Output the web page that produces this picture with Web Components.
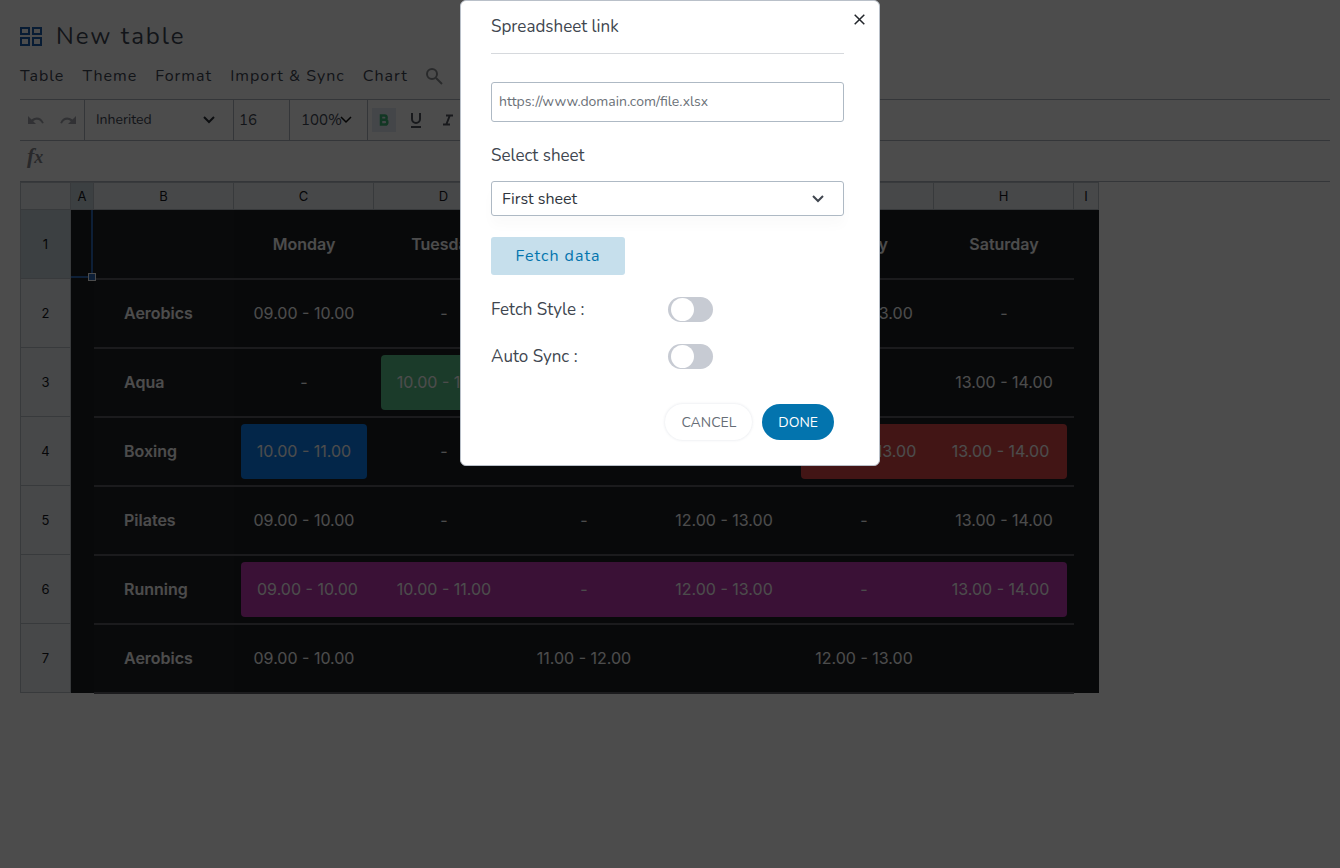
<!DOCTYPE html>
<html lang="en">
<head>
<meta charset="utf-8">
<meta name="viewport" content="width=device-width, initial-scale=1">
<title>New table</title>
<style>
  body {
    margin: 0;
    background: #fff;
    color: #3f4754;
    font-family: Nunito, Lato, sans-serif;
    font-size: 16px;
  }
  main {
    padding: 20px 10px 20px 20px;
  }
</style>
</head>
<body>
<main>
  <table-title>New table</table-title>
  <menu-bar>
    <button>Table</button>
    <button>Theme</button>
    <button>Format</button>
    <button>Import &amp; Sync</button>
    <button>Chart</button>
  </menu-bar>
  <tool-bar></tool-bar>
  <formula-bar></formula-bar>
  <sheet-grid></sheet-grid>
</main>
<link-dialog>
  <span slot="title">Spreadsheet link</span>
  <toggle-row>Fetch Style :</toggle-row>
  <toggle-row>Auto Sync :</toggle-row>
</link-dialog>

<script>
class TableTitle extends HTMLElement {
  connectedCallback() {
    this.attachShadow({ mode: 'open' });
    this.shadowRoot.innerHTML = `
      <style>
        :host {
          display: flex;
          align-items: center;
          gap: 14px;
          height: 33px;
        }
        svg { width: 22px; height: 20px; }
        h1 {
          margin: 0;
          font-size: 24px;
          font-weight: 400;
          letter-spacing: 2px;
          line-height: 35px;
        }
      </style>
      <svg viewBox="0 0 22 20" fill="none" stroke="#1c5fae" stroke-width="2" aria-hidden="true">
        <rect x="1" y="1" width="8" height="6"/>
        <rect x="13" y="1" width="8" height="6"/>
        <rect x="1" y="11" width="8" height="7"/>
        <rect x="13" y="11" width="8" height="7"/>
      </svg>
      <h1><slot></slot></h1>
    `;
  }
}
customElements.define('table-title', TableTitle);

class MenuBar extends HTMLElement {
  connectedCallback() {
    this.attachShadow({ mode: 'open' });
    this.shadowRoot.innerHTML = `
      <style>
        :host {
          display: flex;
          align-items: center;
          gap: 18px;
          height: 46px;
        }
        button, ::slotted(button) {
          border: 0;
          padding: 0;
          background: none;
          color: inherit;
          font: inherit;
          letter-spacing: 1px;
          cursor: pointer;
        }
        button { display: flex; }
        svg { width: 18px; height: 18px; }
      </style>
      <slot></slot>
      <button aria-label="Search">
        <svg viewBox="0 0 18 18" fill="none" stroke="#8b8d92" stroke-width="2">
          <circle cx="6" cy="7" r="5"/>
          <path d="M10 11l6 6"/>
        </svg>
      </button>
    `;
  }
}
customElements.define('menu-bar', MenuBar);

class ToolBar extends HTMLElement {
  connectedCallback() {
    this.attachShadow({ mode: 'open' });
    this.shadowRoot.innerHTML = `
      <style>
        :host {
          display: flex;
          height: 40px;
          border-top: 1px solid #aeb4c0;
          border-bottom: 1px solid #aeb4c0;
        }
        .group {
          display: flex;
          align-items: center;
          box-sizing: border-box;
          border-right: 1px solid #aeb4c0;
        }
        .history { width: 65px; justify-content: space-around; }
        .font { width: 149px; }
        .size { width: 56px; }
        .zoom { width: 78px; }
        .marks { gap: 8px; padding-left: 4px; border: 0; }
        button {
          display: flex;
          align-items: center;
          justify-content: center;
          width: 24px;
          height: 24px;
          padding: 0;
          border: 0;
          background: none;
          color: #50555f;
        }
        button.on { background: #e4ecf4; color: #3fb878; }
        select, input {
          appearance: none;
          border: 0;
          background: none;
          color: inherit;
          font: inherit;
          font-size: 15px;
          box-sizing: border-box;
          width: 100%;
          height: 38px;
          padding: 0;
          outline: none;
        }
        .font select { font-size: 14px; padding: 0 0 2px 11px; }
        .size input { padding-left: 5px; }
        .zoom select { padding-left: 11px; }
        .font svg { width: 12px; margin: 0 18px 0 -30px; }
        .zoom svg { width: 12px; margin: 0 15px 0 -27px; }
        svg { flex: none; pointer-events: none; }
      </style>
      <div class="group history">
        <button aria-label="Undo">
          <svg width="16" height="10" viewBox="0 0 16 10">
            <path d="M0 1v8h8L5.200 6.200C9 3.500 12.500 5 14 8.500l1.800-.600C13.500 2 8 1 3.500 4.500z" fill="#a3a6ad"/>
          </svg>
        </button>
        <button aria-label="Redo">
          <svg width="16" height="10" viewBox="0 0 16 10">
            <path d="M16 1v8H8l2.800-2.800C7 3.500 3.500 5 2 8.500L.200 7.900C2.500 2 8 1 12.500 4.500z" fill="#a3a6ad"/>
          </svg>
        </button>
      </div>
      <div class="group font">
        <select aria-label="Font"><option>Inherited</option></select>
        <svg height="8" viewBox="0 0 12 8" fill="none" stroke="#2b3038" stroke-width="2"><path d="M1 1l5 5 5-5"/></svg>
      </div>
      <div class="group size">
        <input aria-label="Font size" value="16">
      </div>
      <div class="group zoom">
        <select aria-label="Zoom"><option>100%</option></select>
        <svg height="8" viewBox="0 0 12 8" fill="none" stroke="#111" stroke-width="1.500"><path d="M1 1l5 5 5-5"/></svg>
      </div>
      <div class="group marks">
        <button class="on" aria-label="Bold">
          <svg width="10" height="12" viewBox="0 0 10 12" fill="none" stroke="currentColor" stroke-width="2.500">
            <path d="M2 1.500h3.500a2 2 0 0 1 0 4.300H2zM2 5.800h4a2.300 2.300 0 0 1 0 4.700H2z"/>
          </svg>
        </button>
        <button aria-label="Underline">
          <svg width="12" height="15" viewBox="0 0 12 15" fill="none" stroke="currentColor" stroke-width="2">
            <path d="M2 0v6a4 4 0 0 0 8 0V0M1 14h10"/>
          </svg>
        </button>
        <button aria-label="Italic">
          <svg width="10" height="12" viewBox="0 0 10 12" fill="none" stroke="currentColor" stroke-width="2">
            <path d="M3 1.500h7M0 10.500h7M6.800 1.500l-3.500 9"/>
          </svg>
        </button>
      </div>
    `;
  }
}
customElements.define('tool-bar', ToolBar);

class FormulaBar extends HTMLElement {
  connectedCallback() {
    this.attachShadow({ mode: 'open' });
    this.shadowRoot.innerHTML = `
      <style>
        :host {
          display: flex;
          height: 40px;
          border-bottom: 1px solid #aeb4c0;
        }
        label {
          padding: 0 7px;
          color: #85888e;
          font: italic bold 22px/30px "Liberation Serif", serif;
        }
        small { font-size: 18px; }
        input {
          flex: 1;
          border: 0;
          outline: none;
          background: none;
          font: inherit;
        }
      </style>
      <label for="fx"><i>f</i><small>x</small></label>
      <input id="fx">
    `;
  }
}
customElements.define('formula-bar', FormulaBar);

const DAYS = ['', 'Monday', 'Tuesday', '', '', 'Friday', 'Saturday'];

// A cell is its text, or [text, colour, ends]: ends is "l", "r" or both
const ROWS = [
  ['Aerobics', '09.00 - 10.00', '-', '', '', '12.00 - 13.00', '-'],
  ['Aqua', '-', ['10.00 - 11.00', 'green', 'lr'], '', '', '', '13.00 - 14.00'],
  ['Boxing', ['10.00 - 11.00', 'blue', 'lr'], '-', '', '', ['12.00 - 13.00', 'red', 'l'], ['13.00 - 14.00', 'red', 'r']],
  ['Pilates', '09.00 - 10.00', '-', '-', '12.00 - 13.00', '-', '13.00 - 14.00'],
  ['Running', ['09.00 - 10.00', 'purple', 'l'], ['10.00 - 11.00', 'purple', ''], ['-', 'purple', ''],
    ['12.00 - 13.00', 'purple', ''], ['-', 'purple', ''], ['13.00 - 14.00', 'purple', 'r']],
  ['Aerobics', '09.00 - 10.00', '', '11.00 - 12.00', '', '12.00 - 13.00', ''],
];

class SheetGrid extends HTMLElement {
  cell(value) {
    if (!Array.isArray(value)) return `<td>${value}</td>`;
    const [text, colour, ends] = value;
    const sides = [...ends].map(end => 'end-' + end).join(' ');
    return `<td class="filled ${sides}"><div class="${colour}">${text}</div></td>`;
  }

  row(cells, index) {
    const corner = index === 0 ? '<span class="selection"></span>' : '';
    return `
      <tr>
        <th class="num ${index === 0 ? 'active' : ''}" scope="row">${index + 1}</th>
        <td class="edge">${corner}</td>
        ${cells.map(c => this.cell(c)).join('')}
        <td class="edge"></td>
      </tr>`;
  }

  connectedCallback() {
    this.attachShadow({ mode: 'open' });
    this.shadowRoot.innerHTML = `
      <style>
        :host {
          display: block;
          font-family: Inter, sans-serif;
          --rule: #5a5c61;
        }
        table {
          table-layout: fixed;
          width: 1079px;
          border-collapse: separate;
          border-spacing: 0;
        }
        .c-num { width: 51px; }
        .c-a { width: 23px; }
        .c-day { width: 140px; }
        .c-i { width: 25px; }
        th {
          box-sizing: border-box;
          padding: 0;
          background: #eef0f5;
          border-right: 1px solid #bcc1ca;
          border-bottom: 1px solid #bcc1ca;
          color: #15171b;
          font-size: 13px;
          font-weight: 400;
        }
        thead th { height: 28px; padding-bottom: 1px; border-top: 1px solid #bcc1ca; }
        .num { border-left: 1px solid #bcc1ca; }
        th.active { background: #c8d5dc; }
        td {
          box-sizing: border-box;
          height: 69px;
          padding: 0 0 2px;
          background: #1c1e23;
          box-shadow: inset 0 1px var(--rule), inset 0 -1px var(--rule);
          color: #fff;
          font-size: 16px;
          font-weight: 400;
          text-align: center;
        }
        tbody tr:first-child td { box-shadow: inset 0 -1px var(--rule); font-weight: 600; }
        tbody tr:last-child td { box-shadow: inset 0 1px var(--rule), inset 0 -1px var(--rule), 0 1px var(--rule); }
        tbody td:nth-child(3) {
          padding-left: 30px;
          background: #212227;
          font-weight: 600;
          text-align: left;
        }
        tbody tr td.edge { position: relative; box-shadow: none; }
        .selection {
          position: absolute;
          top: 0; left: 0; right: 1px; bottom: 1px;
          border-right: 2px solid #2c69b8;
          border-bottom: 2px solid #2c69b8;
          z-index: 1;
        }
        .selection::after {
          content: "";
          position: absolute;
          right: -5px; bottom: -5px;
          width: 6px; height: 6px;
          border: 1px solid #fff;
          background: #2c69b8;
        }
        .filled { padding: 7px 0; }
        .filled div { height: 55px; line-height: 55px; }
        .end-l { padding-left: 7px; }
        .end-r { padding-right: 7px; }
        .end-l div { border-top-left-radius: 4px; border-bottom-left-radius: 4px; }
        .end-r div { border-top-right-radius: 4px; border-bottom-right-radius: 4px; }
        .green { background: #5dc58c; }
        .blue { background: #0a7ff5; }
        .red { background: #dc4949; }
        .purple { background: #c139b4; }
      </style>
      <table>
        <colgroup>
          <col class="c-num"><col class="c-a">
          ${DAYS.map(() => '<col class="c-day">').join('')}
          <col class="c-i">
        </colgroup>
        <thead>
          <tr>
            <th class="num"></th>
            ${[...'ABCDEFGHI'].map(c => `<th scope="col" class="${c === 'A' ? 'active' : ''}">${c}</th>`).join('')}
          </tr>
        </thead>
        <tbody>${[DAYS, ...ROWS].map((r, i) => this.row(r, i)).join('')}</tbody>
      </table>
    `;
  }
}
customElements.define('sheet-grid', SheetGrid);

class ToggleRow extends HTMLElement {
  connectedCallback() {
    this.attachShadow({ mode: 'open' });
    this.shadowRoot.innerHTML = `
      <style>
        :host { display: block; }
        label {
          display: grid;
          grid-template-columns: 1fr 1fr;
          align-items: center;
          height: 27px;
        }
        input {
          appearance: none;
          box-sizing: border-box;
          width: 45px;
          height: 25px;
          margin: 0;
          padding: 1px 3px;
          border-radius: 13px;
          background: #c7cbd3;
        }
        input::before {
          content: "";
          display: block;
          width: 23px;
          height: 23px;
          border-radius: 50%;
          background: #fff;
        }
        input:checked { background: #0374ae; }
        input:checked::before { margin-left: auto; }
      </style>
      <label><span><slot></slot></span><input type="checkbox" role="switch"></label>
    `;
  }
}
customElements.define('toggle-row', ToggleRow);

class LinkDialog extends HTMLElement {
  connectedCallback() {
    this.attachShadow({ mode: 'open' });
    this.shadowRoot.innerHTML = `
      <style>
        :host {
          position: fixed;
          inset: 0;
          display: flex;
          justify-content: center;
          align-items: flex-start;
          background: rgba(0, 0, 0, 0.7);
          z-index: 10;
        }
        section {
          position: relative;
          box-sizing: border-box;
          width: 420px;
          max-width: 100%;
          padding: 0 35px 25px 30px;
          border: 1px solid #b9c0c9;
          border-radius: 6px;
          background: #fff;
          color: #40464f;
          font-size: 17px;
        }
        h2 {
          margin: 0 0 28px;
          border-bottom: 1px solid #d6d9dd;
          font-size: 17px;
          font-weight: 400;
          line-height: 52px;
        }
        button, input, select { font: inherit; font-size: 16px; }
        .close {
          position: absolute;
          top: 8px; right: 9px;
          display: flex;
          padding: 5px;
          border: 0;
          background: none;
        }
        .url {
          display: block;
          box-sizing: border-box;
          width: 100%;
          height: 40px;
          padding: 0 7px 2px;
          border: 1px solid #aeb9c4;
          border-radius: 3px;
          font-size: 14px;
          outline: none;
        }
        .url::placeholder { color: #6b7178; }
        .name { display: block; margin: 22px 0 13px; line-height: 24px; }
        .pick {
          display: flex;
          align-items: center;
          border: 1px solid #aeb9c4;
          border-radius: 3px;
          box-shadow: 0 10px 12px rgba(0, 0, 0, 0.02);
        }
        .pick select {
          appearance: none;
          flex: 1;
          height: 33px;
          padding: 0 10px;
          border: 0;
          background: none;
          color: #2f353d;
          outline: none;
        }
        .pick svg { margin: 0 19px 0 -31px; pointer-events: none; }
        .fetch {
          width: 134px;
          height: 38px;
          margin: 21px 0;
          padding: 0;
          border: 0;
          border-radius: 3px;
          background: #c6dfec;
          color: #0374ae;
          letter-spacing: 1px;
        }
        .toggles { display: grid; gap: 20px; }
        footer {
          display: flex;
          justify-content: flex-end;
          gap: 10px;
          margin-top: 34px;
          padding-right: 10px;
        }
        footer button {
          height: 36px;
          padding: 0 16px;
          border: 0;
          border-radius: 18px;
          font-size: 14px;
        }
        .cancel {
          background: #fff;
          color: #666d76;
          box-shadow: 0 0 3px rgba(60, 80, 110, 0.16);
        }
        .done { background: #0374ae; color: #fff; }
      </style>
      <section role="dialog" aria-labelledby="heading">
        <h2 id="heading"><slot name="title"></slot></h2>
        <button class="close" aria-label="Close">
          <svg width="11" height="11" viewBox="0 0 11 11" stroke="#22262b" stroke-width="1.500">
            <path d="M.700.700l9.600 9.600M10.300.700L.700 10.300"/>
          </svg>
        </button>
        <input class="url" type="url" aria-label="Spreadsheet link" placeholder="https://www.domain.com/file.xlsx">
        <label class="name" for="sheet">Select sheet</label>
        <div class="pick">
          <select id="sheet"><option>First sheet</option></select>
          <svg width="12" height="8" viewBox="0 0 12 8" fill="none" stroke="#40464f" stroke-width="2"><path d="M1 1l5 5 5-5"/></svg>
        </div>
        <button class="fetch">Fetch data</button>
        <div class="toggles"><slot></slot></div>
        <footer>
          <button class="cancel">CANCEL</button>
          <button class="done">DONE</button>
        </footer>
      </section>
    `;
    this.style.fontSize = '17px';
  }
}
customElements.define('link-dialog', LinkDialog);
</script>
</body>
</html>
